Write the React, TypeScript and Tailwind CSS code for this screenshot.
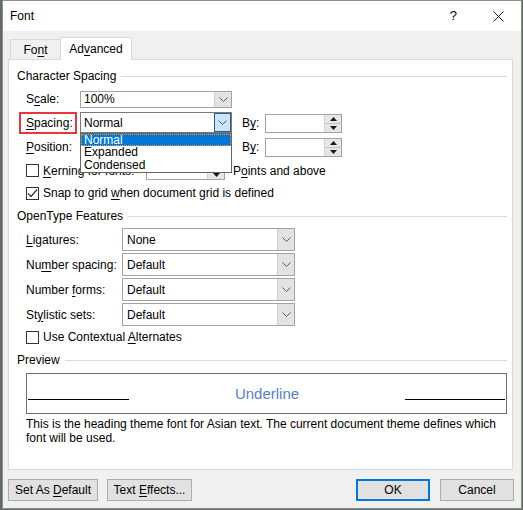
import React from "react"

const U = ({ children }: { children: React.ReactNode }) => (
  <span className="underline decoration-1 underline-offset-[2px]">{children}</span>
)

const Chevron = () => (
  <svg width="9" height="5" viewBox="0 0 9 5">
    <path d="M0.5 0.5 L4.5 4.5 L8.5 0.5" fill="none" stroke="#5a5a5a" strokeWidth="1" />
  </svg>
)

const Combo = ({ value, className, pad = "pl-[3px]" }: { value: string; className: string; pad?: string }) => (
  <div className={`flex items-stretch border border-[#a3a3a3] bg-white ${className}`}>
    <div className={`flex-1 flex items-center ${pad}`}>{value}</div>
    <div className="w-[17px] bg-[#e3e3e3] border-l border-[#cdcdcd] flex items-center justify-center">
      <Chevron />
    </div>
  </div>
)

const Spin = ({ className }: { className: string }) => (
  <div className={`flex items-stretch border border-[#a3a3a3] bg-white ${className}`}>
    <div className="flex-1" />
    <div className="w-[17px] flex flex-col border-l border-[#d4d4d4]">
      <div className="flex-1 bg-[#e6e6e6] border-b border-[#c4c4c4] flex items-center justify-center">
        <svg width="7" height="4" viewBox="0 0 7 4">
          <path d="M3.5 0 L7 4 L0 4 Z" fill="#1a1a1a" />
        </svg>
      </div>
      <div className="flex-1 bg-[#e6e6e6] flex items-center justify-center">
        <svg width="7" height="4" viewBox="0 0 7 4">
          <path d="M0 0 L7 0 L3.5 4 Z" fill="#1a1a1a" />
        </svg>
      </div>
    </div>
  </div>
)

const Check = ({ checked }: { checked?: boolean }) => (
  <div className="w-[13px] h-[13px] border border-[#333333] bg-white flex items-center justify-center shrink-0">
    {checked && (
      <svg width="11" height="11" viewBox="0 0 11 11">
        <path d="M1 5.5 L4 8.5 L10 1.5" fill="none" stroke="#333333" strokeWidth="1.2" />
      </svg>
    )}
  </div>
)

const Group = ({ title }: { title: string }) => (
  <div className="h-[16px] flex items-center pl-[8px] pr-[5px]">
    <span>{title}</span>
    <div className="flex-1 h-px bg-[#dcdcdc] ml-[5px]" />
  </div>
)

const Btn = ({ children, className }: { children: React.ReactNode; className: string }) => (
  <div className={`h-[22px] flex items-center justify-center bg-[#e1e1e1] ${className}`}>
    <span>{children}</span>
  </div>
)

export default function App() {
  const features = [
    { label: <><U>L</U>igatures:</>, value: "None" },
    { label: <>Nu<U>m</U>ber spacing:</>, value: "Default" },
    { label: <>Number <U>f</U>orms:</>, value: "Default" },
    { label: <>St<U>y</U>listic sets:</>, value: "Default" },
  ]

  return (
    <div className="w-[523px] h-[510px] bg-[#5f6d66] pl-[2px] font-['Liberation_Sans',Arial,sans-serif] text-[12px] leading-[16px] text-black">
      <div className="w-[520px] h-[509px] border border-[#8c8c8c] bg-[#f0f0f0] flex flex-col">
        {/* title bar */}
        <div className="h-[30px] bg-white flex items-center pl-[7px] pr-[17px]">
          <span>Font</span>
          <span className="ml-auto text-[13px]">?</span>
          <svg className="ml-[36px]" width="11" height="11" viewBox="0 0 11 11">
            <path d="M0.5 0.5 L10.5 10.5 M10.5 0.5 L0.5 10.5" stroke="#1a1a1a" strokeWidth="1" />
          </svg>
        </div>

        {/* tabs */}
        <div className="mt-[6px] h-[23px] flex items-end pl-[7px]">
          <div className="w-[50px] h-[21px] border-t border-l border-[#d9d9d9] flex items-center justify-center">
            <span>Fo<U>n</U>t</span>
          </div>
          <div className="relative z-10 w-[72px] h-[23px] border-t border-l border-r border-[#d9d9d9] bg-white flex items-center justify-center">
            <span>Ad<U>v</U>anced</span>
          </div>
        </div>

        {/* panel */}
        <div className="-mt-px ml-[5px] w-[505px] h-[411px] border border-[#d9d9d9] bg-white flex flex-col">
          <div className="mt-[8px]">
            <Group title="Character Spacing" />
          </div>

          <div className="pl-[17px] flex flex-col">
            <div className="mt-[5px] h-[20px] flex items-center">
              <span className="w-[54px]">S<U>c</U>ale:</span>
              <Combo value="100%" className="w-[152px] h-[17px]" />
            </div>

            <div className="mt-[3px] h-[22px] flex items-center">
              <div className="relative w-[54px] h-full flex items-center">
                <span><U>S</U>pacing:</span>
                <div className="absolute left-[-7px] top-0 w-[58px] h-[22px] border-2 border-[#e8363a]" />
              </div>
              <div className="relative self-start w-[152px] h-[21px] flex items-stretch border border-[#7a7a7a] bg-white">
                <div className="flex-1 flex items-center pl-[3px]">Normal</div>
                <div className="w-[17px] bg-[#cce4f7] border border-[#2a5c90] flex items-center justify-center">
                  <Chevron />
                </div>
                <div className="absolute left-[-1px] top-[20px] w-[152px] h-[40px] border border-[#646464] bg-white z-20 flex flex-col leading-[13px]">
                  <div className="h-[12px] bg-[#0078d7] text-white border border-dotted border-[#f0a040] pl-[2px] flex items-center">Normal</div>
                  <div className="h-[13px] pl-[3px] flex items-center">Expanded</div>
                  <div className="h-[13px] pl-[3px] flex items-center">Condensed</div>
                </div>
              </div>
              <span className="ml-[10px] w-[23px]">B<U>y</U>:</span>
              <Spin className="w-[77px] h-[19px]" />
            </div>

            <div className="mt-[2px] h-[22px] flex items-center">
              <span className="w-[54px]"><U>P</U>osition:</span>
              <div className="w-[152px]" />
              <span className="ml-[10px] w-[23px]">B<U>y</U>:</span>
              <Spin className="w-[77px] h-[19px]" />
            </div>

            <div className="mt-[2px] h-[21px] flex items-center">
              <Check />
              <span className="ml-[4px] w-[103px]"><U>K</U>erning for fonts:</span>
              <Spin className="w-[79px] h-[19px]" />
              <span className="ml-[8px]">P<U>o</U>ints and above</span>
            </div>

            <div className="mt-[1px] h-[22px] flex items-center">
              <Check checked />
              <span className="ml-[4px]">Snap to grid <U>w</U>hen document grid is defined</span>
            </div>
          </div>

          <div className="mt-[4px]">
            <Group title="OpenType Features" />
          </div>

          <div className="pl-[17px] mt-[3px] flex flex-col">
            {features.map((f, i) => (
              <div key={i} className="h-[25px] flex items-center">
                <span className="w-[96px]">{f.label}</span>
                <Combo value={f.value} className="w-[173px] h-[23px]" pad="pl-[4px]" />
              </div>
            ))}
            <div className="h-[20px] flex items-center">
              <Check />
              <span className="ml-[4px]">Use Contextual <U>A</U>lternates</span>
            </div>
          </div>

          <div className="mt-[5px]">
            <Group title="Preview" />
          </div>

          <div className="pl-[17px] flex flex-col">
            <div className="mt-[5px] w-[481px] h-[41px] border border-[#6e6e6e] flex items-center justify-between px-[1px]">
              <div className="w-[101px] h-px bg-black mt-[12px]" />
              <span className="text-[15px] leading-[18px] text-[#5b7fc6]">Underline</span>
              <div className="w-[100px] h-px bg-black mt-[12px]" />
            </div>
            <p className="mt-[3px] leading-[14px]">
              This is the heading theme font for Asian text. The current document theme defines which
              <br />
              font will be used.
            </p>
          </div>
        </div>

        {/* buttons */}
        <div className="mt-[9px] flex items-center pl-[5px] pr-[7px]">
          <Btn className="w-[90px] border border-[#adadad]">Set As <U>D</U>efault</Btn>
          <Btn className="ml-[9px] w-[85px] border border-[#adadad]">Text <U>E</U>ffects...</Btn>
          <Btn className="ml-auto w-[74px] border-2 border-[#0078d7]">OK</Btn>
          <Btn className="ml-[10px] w-[74px] border border-[#adadad]">Cancel</Btn>
        </div>
      </div>
    </div>
  )
}
